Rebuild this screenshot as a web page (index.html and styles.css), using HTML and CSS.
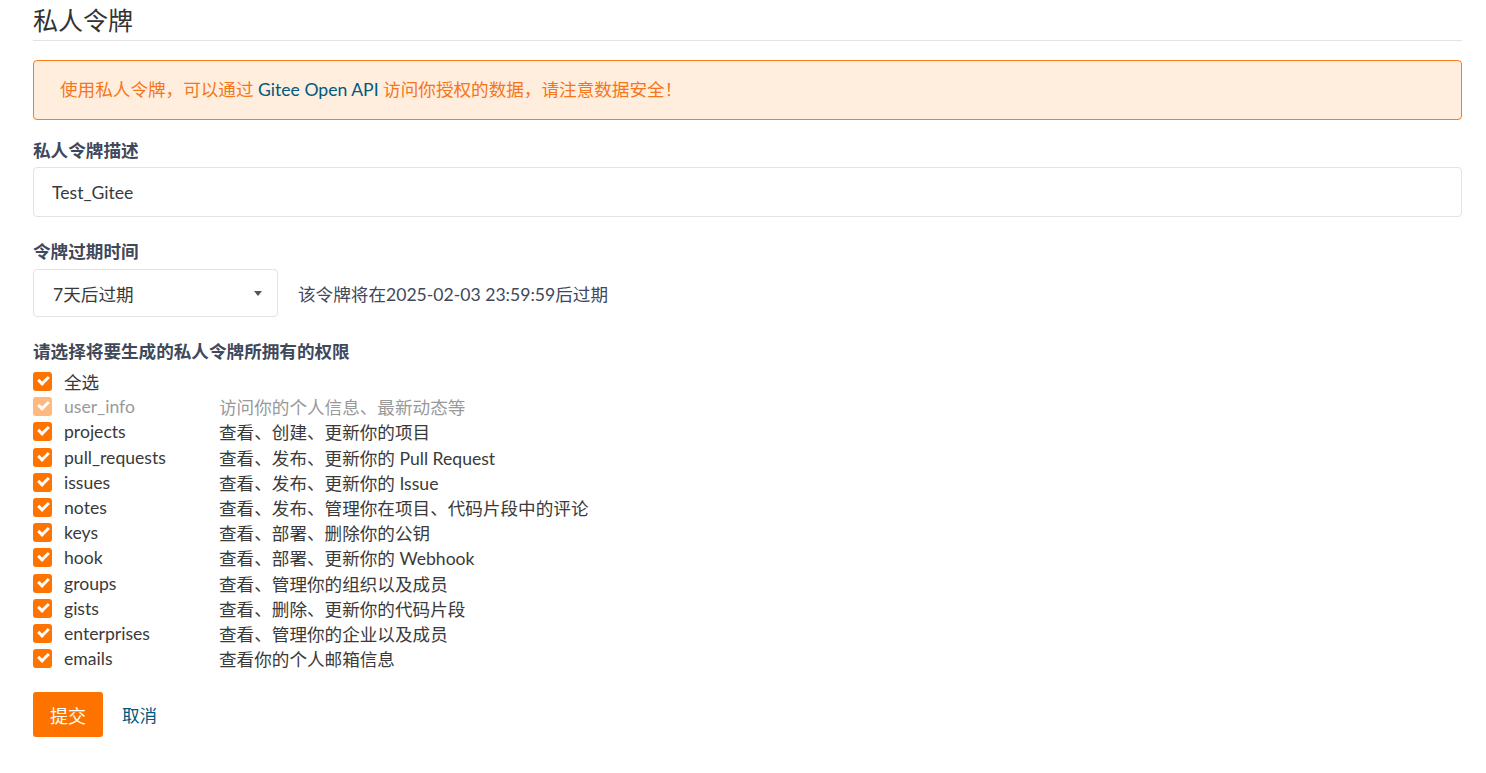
FILE: index.html
```html
<!DOCTYPE html>
<html lang="zh-CN">
<head>
  <meta charset="UTF-8" />
  <title>私人令牌</title>
  <link rel="stylesheet" href="styles.css">
</head>
<body>
  <div class="page">
    <h2 class="titulo">私人令牌</h2>

    <div class="aviso">
      使用私人令牌，可以通过 <a href="#">Gitee Open API</a> 访问你授权的数据，请注意数据安全！
    </div>

    <div class="campo">
      <label>私人令牌描述</label>
      <input type="text" class="entrada" value="Test_Gitee" />
    </div>

    <div class="campo">
      <label>令牌过期时间</label>
      <div class="linha-expira">
        <div class="seletor">
          <span>7天后过期</span>
          <span class="seta"></span>
        </div>
        <span class="expira-txt">该令牌将在2025-02-03 23:59:59后过期</span>
      </div>
    </div>

    <div class="campo">
      <label>请选择将要生成的私人令牌所拥有的权限</label>
      <div class="permissoes">
        <div class="perm"><span class="check"></span><span class="nome">全选</span></div>
        <div class="perm desativado"><span class="check"></span><span class="nome">user_info</span><span class="desc">访问你的个人信息、最新动态等</span></div>
        <div class="perm"><span class="check"></span><span class="nome">projects</span><span class="desc">查看、创建、更新你的项目</span></div>
        <div class="perm"><span class="check"></span><span class="nome">pull_requests</span><span class="desc">查看、发布、更新你的 Pull Request</span></div>
        <div class="perm"><span class="check"></span><span class="nome">issues</span><span class="desc">查看、发布、更新你的 Issue</span></div>
        <div class="perm"><span class="check"></span><span class="nome">notes</span><span class="desc">查看、发布、管理你在项目、代码片段中的评论</span></div>
        <div class="perm"><span class="check"></span><span class="nome">keys</span><span class="desc">查看、部署、删除你的公钥</span></div>
        <div class="perm"><span class="check"></span><span class="nome">hook</span><span class="desc">查看、部署、更新你的 Webhook</span></div>
        <div class="perm"><span class="check"></span><span class="nome">groups</span><span class="desc">查看、管理你的组织以及成员</span></div>
        <div class="perm"><span class="check"></span><span class="nome">gists</span><span class="desc">查看、删除、更新你的代码片段</span></div>
        <div class="perm"><span class="check"></span><span class="nome">enterprises</span><span class="desc">查看、管理你的企业以及成员</span></div>
        <div class="perm"><span class="check"></span><span class="nome">emails</span><span class="desc">查看你的个人邮箱信息</span></div>
      </div>
    </div>

    <div class="acoes">
      <button class="enviar">提交</button>
      <a href="#" class="cancelar">取消</a>
    </div>
  </div>
</body>
</html>
```

FILE: styles.css
```css
:root {
  --laranja: #fe7300;
  --azul: #005980;
  --texto: #3a3a3a;
  --rotulo: #40485b;
}
body {
  margin: 0;
  font-family: Lato, "Noto Sans CJK SC", sans-serif;
  font-size: 17.6px;
  color: var(--texto);
  background: #fff;
}
.page {
  margin: 0 24px 0 33px;
}
.titulo {
  margin: 0;
  padding: 4px 0 4px;
  font-size: 25px;
  font-weight: normal;
  line-height: 32px;
  color: #333;
  border-bottom: 1px solid #e3e3e3;
}
.aviso {
  margin-top: 19px;
  height: 58px;
  line-height: 58px;
  padding: 0 26px;
  background: #ffeddd;
  border: 1px solid #fa7a1c;
  border-radius: 4px;
  color: #f5761a;
}
.aviso a {
  color: var(--azul);
  text-decoration: none;
}
.campo {
  margin-top: 20px;
}
.campo + .campo {
  margin-top: 24px;
}
.campo label {
  display: block;
  font-weight: bold;
  line-height: 22px;
  color: var(--rotulo);
}
.entrada {
  display: block;
  box-sizing: border-box;
  width: 100%;
  height: 50px;
  margin-top: 5px;
  padding: 0 18px;
  font: inherit;
  color: var(--texto);
  border: 1px solid #e1e3e8;
  border-radius: 4px;
  outline: none;
}
.linha-expira {
  display: flex;
  align-items: center;
  margin-top: 6px;
}
.seletor {
  box-sizing: border-box;
  width: 245px;
  height: 48px;
  padding: 0 15px 0 19px;
  display: flex;
  align-items: center;
  justify-content: space-between;
  border: 1px solid #e1e3e8;
  border-radius: 4px;
  color: var(--texto);
}
.seta {
  width: 0;
  height: 0;
  border-left: 4.5px solid transparent;
  border-right: 4.5px solid transparent;
  border-top: 5px solid #555;
}
.expira-txt {
  margin-left: 20px;
  color: var(--rotulo);
}
.permissoes {
  margin-top: 6px;
}
.perm {
  display: flex;
  align-items: center;
  height: 25.2px;
}
.check {
  position: relative;
  width: 19px;
  height: 19px;
  border-radius: 3px;
  background: #ff7300;
  flex-shrink: 0;
}
.check::after {
  content: "";
  position: absolute;
  left: 5px;
  top: 4px;
  width: 8px;
  height: 4px;
  border-left: 3px solid #fff;
  border-bottom: 3px solid #fff;
  transform: rotate(-45deg);
}
.nome {
  width: 155px;
  margin-left: 12px;
  color: var(--texto);
}
.desc {
  color: var(--texto);
}
.desativado .check {
  opacity: 0.5;
}
.desativado .nome, .desativado .desc {
  color: #999;
}
.acoes {
  display: flex;
  align-items: center;
  margin-top: 21px;
}
.enviar {
  width: 70px;
  height: 45px;
  border: none;
  border-radius: 3px;
  background: var(--laranja);
  color: #fff;
  font: inherit;
  font-size: 18px;
  cursor: pointer;
}
.cancelar {
  margin-left: 19px;
  color: var(--azul);
  text-decoration: none;
  font-size: 17.6px;
}
```
